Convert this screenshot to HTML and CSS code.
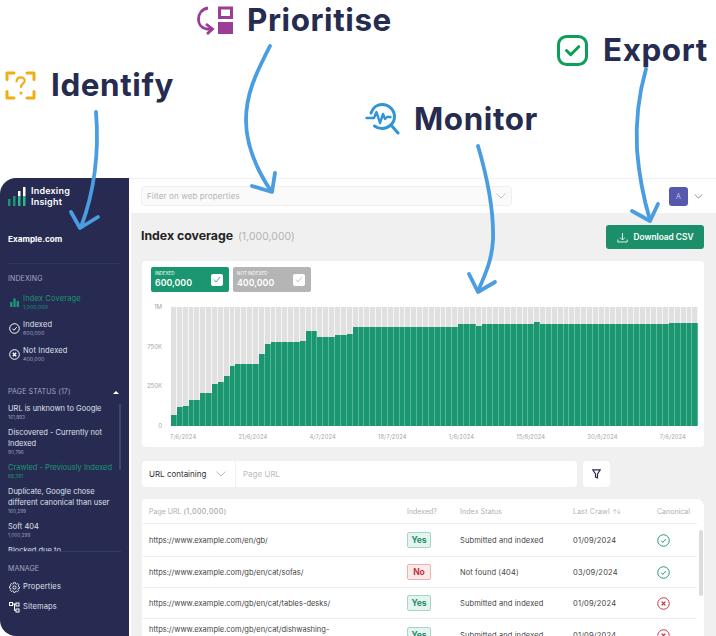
FILE: index.html
```html
<!DOCTYPE html>
<html lang="en">
<head>
<meta charset="utf-8">
<title>Indexing Insight</title>
<link rel="stylesheet" href="styles.css">
</head>
<body>
<div class="stage">
  <header class="hero">
    <div class="callout callout-identify">
      <svg class="callout-icon" width="33" height="31" viewBox="0 0 33 31" fill="none" stroke="#f1ad14" stroke-width="3" stroke-linecap="round" stroke-linejoin="round"><path d="M10 3H3v6.500M23 3h7v6.500M10 28H3v-6.500M23 28h7v-6.500"/><path d="M12.500 11.500c.3-2.800 2-4.200 4.200-4.200 2.300 0 4 1.500 4 3.500 0 2.800-3.700 3-3.700 6.200" stroke-width="2.200"/><circle cx="17" cy="23" r=".8" fill="#f1ad14" stroke-width="1.500"/></svg>
      <span>Identify</span>
    </div>
    <div class="callout callout-prioritise">
      <svg class="callout-icon" width="37" height="30" viewBox="0 0 37 30" fill="none"><path d="M11 3C5 4 1.500 8.500 1.500 14.500c0 4.500 3 8.500 8 9.500h5" stroke="#9b3d97" stroke-width="2.800"/><path d="M9 19l6.500 5-5.500 5" stroke="#9b3d97" stroke-width="2.800"/><rect x="22.500" y="3" width="12" height="9.500" stroke="#9b3d97" stroke-width="3"/><rect x="21" y="17" width="15" height="12" fill="#9b3d97"/></svg>
      <span>Prioritise</span>
    </div>
    <div class="callout callout-monitor">
      <svg class="callout-icon" width="35" height="32" viewBox="0 0 35 32" fill="none" stroke="#2f94d8" stroke-width="3" stroke-linecap="round" stroke-linejoin="round"><path d="M6 10C8 4 13 1.500 17 1.500c7 0 12.500 5.500 12.500 12S24 25.500 17 25.500c-3 0-5.500-1-7.500-2.500"/><path d="M26 22l7 8"/><path d="M1.500 15H9l2.500-6 3.500 11 3-9 2 5 2-2h3.500" stroke-width="2.400"/></svg>
      <span>Monitor</span>
    </div>
    <div class="callout callout-export">
      <svg class="callout-icon" width="31" height="31" viewBox="0 0 31 31" fill="none" stroke="#0d9f57" stroke-linecap="round" stroke-linejoin="round"><rect x="1.500" y="1.500" width="28" height="28" rx="8" stroke-width="3"/><path d="M9.500 15.500l4.200 4.200 8-8" stroke-width="3"/></svg>
      <span>Export</span>
    </div>
  </header>

  <div class="app">
    <aside class="sidebar">
      <div class="brand">
        <svg width="18" height="19" viewBox="0 0 18 19"><rect x="0" y="12" width="2.500" height="7" fill="#1a9670"/><rect x="5" y="9" width="2.500" height="10" fill="#1a9670"/><rect x="10" y="4" width="2.500" height="5" fill="#fff"/><rect x="10" y="9" width="2.500" height="10" fill="#2bb889"/><rect x="15" y="0" width="2.500" height="9" fill="#fff"/><rect x="15" y="9" width="2.500" height="10" fill="#2bb889"/></svg>
        <div class="brand-name">Indexing<br>Insight</div>
      </div>
      <div class="site">Example.com</div>
      <hr class="rule">
      <div class="nav-title">INDEXING</div>
      <ul class="nav">
        <li class="nav-item is-active">
          <svg width="11" height="11" viewBox="0 0 11 11" fill="#1a9670"><rect x="1" y="5" width="2.400" height="5"/><rect x="4.300" y="1.500" width="2.400" height="8.500"/><rect x="7.600" y="4" width="2.400" height="6"/></svg>
          <div><div class="nav-label">Index Coverage</div><div class="nav-sub">1,000,000</div></div>
        </li>
        <li class="nav-item">
          <svg width="11" height="11" viewBox="0 0 11 11" fill="none" stroke="#fff" stroke-width="1"><circle cx="5.500" cy="5.500" r="4.800"/><path d="M3.500 5.700l1.500 1.500 2.700-3"/></svg>
          <div><div class="nav-label">Indexed</div><div class="nav-sub">600,000</div></div>
        </li>
        <li class="nav-item">
          <svg width="11" height="11" viewBox="0 0 11 11" fill="none" stroke="#fff" stroke-width="1"><circle cx="5.500" cy="5.500" r="4.800"/><path d="M3.800 3.800l3.400 3.400M7.200 3.800l-3.400 3.400" stroke-width="1.400"/></svg>
          <div><div class="nav-label">Not Indexed</div><div class="nav-sub">400,000</div></div>
        </li>
      </ul>
      <div class="nav-title nav-title-row">PAGE STATUS (17)<span class="caret"></span></div>
      <div class="status-scroll">
        <span class="status-thumb"></span>
        <div class="status"><div class="status-label">URL is unknown to Google</div><div class="status-sub">161,893</div></div>
        <div class="status"><div class="status-label">Discovered - Currently not Indexed</div><div class="status-sub">90,796</div></div>
        <div class="status is-active"><div class="status-label">Crawled - Previously Indexed</div><div class="status-sub">88,391</div></div>
        <div class="status"><div class="status-label">Duplicate, Google chose different canonical than user</div><div class="status-sub">160,299</div></div>
        <div class="status"><div class="status-label">Soft 404</div><div class="status-sub">1,000,299</div></div>
        <div class="status"><div class="status-label">Blocked due to</div></div>
      </div>
      <div class="nav-title manage-title">MANAGE</div>
      <ul class="nav manage">
        <li class="nav-item">
          <svg width="11" height="11" viewBox="0 0 24 24" fill="none" stroke="#fff" stroke-width="2"><circle cx="12" cy="12" r="3.500"/><path d="M10 2h4l.6 3 2.500 1 2.600-1.700 2.800 2.800L20.800 9.700l1 2.500 2.200.6v3l-3 .6-1 2.500 1.700 2.600-2.800 2.800-2.600-1.700-2.500 1L13.200 26h-3l-.6-3-2.500-1-2.600 1.700-2.800-2.800 1.700-2.600-1-2.500-3-.6v-4l3-.6 1-2.500L1.700 6.800l2.800-2.800 2.600 1.700 2.500-1z" transform="translate(1.300 -.5) scale(.9)"/></svg>
          <div class="nav-label">Properties</div>
        </li>
        <li class="nav-item">
          <svg width="11" height="11" viewBox="0 0 11 11" fill="none" stroke="#fff" stroke-width="1"><rect x=".5" y=".5" width="3" height="3"/><rect x="7" y="1" width="3" height="3"/><rect x="7" y="7" width="3" height="3"/><path d="M3.500 2h3.500M5.500 2v6.500H7"/></svg>
          <div class="nav-label">Sitemaps</div>
        </li>
      </ul>
    </aside>

    <main class="main">
      <div class="topbar">
        <div class="prop-filter">
          <span>Filter on web properties</span>
          <svg class="chev" width="10" height="6" viewBox="0 0 10 6" fill="none" stroke="#c4c4c4" stroke-width="1"><path d="M.5.5L5 5 9.500.5"/></svg>
        </div>
        <div class="avatar">A</div>
        <svg class="chev" width="9" height="5" viewBox="0 0 10 6" fill="none" stroke="#777" stroke-width="1"><path d="M.5.5L5 5 9.500.5"/></svg>
      </div>

      <div class="content">
        <div class="title-row">
          <h1 class="title">Index coverage <span class="title-count">(1,000,000)</span></h1>
          <button class="download" type="button">
            <svg width="11" height="11" viewBox="0 0 11 11" fill="none" stroke="#d8f0e7" stroke-width="1"><path d="M5.500 1v6.500M3 5.500l2.500 2.500L8 5.500M.8 7.500V10h9.400V7.500"/></svg>
            Download CSV
          </button>
        </div>

        <section class="chart-card">
          <div class="stats">
            <div class="stat stat-on"><div><div class="stat-label">INDEXED</div><div class="stat-value">600,000</div></div><span class="stat-check"><svg width="8" height="7" viewBox="0 0 8 7" fill="none" stroke="#1a9670" stroke-width=".8"><path d="M1 3.500l2 2.500 4-5"/></svg></span></div>
            <div class="stat stat-off"><div><div class="stat-label">NOT INDEXED</div><div class="stat-value">400,000</div></div><span class="stat-check"><svg width="8" height="7" viewBox="0 0 8 7" fill="none" stroke="#b5b5b5" stroke-width=".8"><path d="M1 3.500l2 2.500 4-5"/></svg></span></div>
          </div>
          <div class="plot">
            <div class="y-axis"><span>1M</span><span>750K</span><span>250K</span><span>0</span></div>
            <div class="bars" id="bars"></div>
          </div>
          <div class="x-axis"><span>7/6/2024</span><span>21/6/2024</span><span>4/7/2024</span><span>18/7/2024</span><span>1/8/2024</span><span>15/8/2024</span><span>30/8/2024</span><span>7/6/2024</span></div>
        </section>

        <div class="filter-row">
          <div class="search">
            <div class="search-type">URL containing<svg width="10" height="6" viewBox="0 0 10 6" fill="none" stroke="#bbb" stroke-width="1"><path d="M.5.5L5 5 9.500.5"/></svg></div>
            <div class="search-input">Page URL</div>
          </div>
          <button class="filter-btn" type="button" aria-label="Filter"><svg width="9" height="10" viewBox="0 0 9 10" fill="none" stroke="#2a2d4f" stroke-width="1.200"><path d="M.7.8h7.600L5.500 5v3.800L3.500 8V5z"/></svg></button>
        </div>

        <section class="table-card">
          <span class="table-thumb"></span>
          <div class="row row-head">
            <div class="c-url">Page URL <b>(1,000,000)</b></div><div class="c-idx">Indexed?</div><div class="c-status">Index Status</div><div class="c-date">Last Crawl <span class="sort">↑↓</span></div><div class="c-can">Canonical</div>
          </div>
          <div class="row row-1">
            <div class="c-url">https://www.example.com/en/gb/</div><div class="c-idx"><span class="pill yes">Yes</span></div><div class="c-status">Submitted and indexed</div><div class="c-date">01/09/2024</div><div class="c-can"><svg class="ok" width="13" height="13" viewBox="0 0 14 14"><circle cx="7" cy="7" r="6.200"/><path d="M4.500 7.200l1.800 1.800 3.200-3.500"/></svg></div>
          </div>
          <div class="row">
            <div class="c-url">https://www.example.com/gb/en/cat/sofas/</div><div class="c-idx"><span class="pill no">No</span></div><div class="c-status">Not found (404)</div><div class="c-date">03/09/2024</div><div class="c-can"><svg class="ok" width="13" height="13" viewBox="0 0 14 14"><circle cx="7" cy="7" r="6.200"/><path d="M4.500 7.200l1.800 1.800 3.200-3.500"/></svg></div>
          </div>
          <div class="row">
            <div class="c-url">https://www.example.com/gb/en/cat/tables-desks/</div><div class="c-idx"><span class="pill yes">Yes</span></div><div class="c-status">Submitted and indexed</div><div class="c-date">01/09/2024</div><div class="c-can"><svg class="bad" width="13" height="13" viewBox="0 0 14 14"><circle cx="7" cy="7" r="6.200"/><path d="M5 5l4 4M9 5l-4 4"/></svg></div>
          </div>
          <div class="row row-last">
            <div class="c-url">https://www.example.com/gb/en/cat/dishwashing-</div><div class="c-idx"><span class="pill yes">Yes</span></div><div class="c-status">Submitted and indexed</div><div class="c-date">01/09/2024</div><div class="c-can"><svg class="bad" width="13" height="13" viewBox="0 0 14 14"><circle cx="7" cy="7" r="6.200"/><path d="M5 5l4 4M9 5l-4 4"/></svg></div>
          </div>
        </section>
      </div>
    </main>
  </div>

  <svg class="arrows" width="716" height="636" viewBox="0 0 716 636" fill="none" stroke="#4a9de0" stroke-width="3.800" stroke-linecap="round" stroke-linejoin="round">
    <path d="M96 112C99 150 95 190 81 227"/><path d="M71 212L80 228 98 217"/>
    <path d="M270 46C255 75 246 95 246 120C246 145 257 170 271 191"/><path d="M252 186L272 192 275 173"/>
    <path d="M478 146C488 180 494 210 493 240C492 260 485 275 478 291"/><path d="M469 274L478 292 495 282"/>
    <path d="M646 69C637 100 636 130 637 150C639 175 644 200 650 220"/><path d="M632 211L650 221 658 204"/>
  </svg>
</div>
<script src="chart.js"></script>
</body>
</html>
```

FILE: styles.css
```css
* { box-sizing: border-box; }
html, body { margin: 0; padding: 0; background: #fff; }
body { font-family: Inter, "Liberation Sans", sans-serif; color: #333; }
ul { list-style: none; margin: 0; padding: 0; }
h1 { margin: 0; }
button { font-family: inherit; border: 0; padding: 0; }

.stage { position: relative; width: 716px; height: 636px; overflow: hidden; }
.hero { position: relative; height: 178px; }
.arrows { position: absolute; left: 0; top: 0; pointer-events: none; }

.callout { position: absolute; display: flex; align-items: center; color: #262b50; font-weight: 700; font-size: 31.400px; line-height: 36px; white-space: nowrap; letter-spacing: .6px; }
.callout-identify { left: 4px; top: 67px; gap: 14px; }
.callout-prioritise { left: 197px; top: 2px; gap: 13px; }
.callout-monitor { left: 365px; top: 101px; gap: 14px; }
.callout-export { left: 557px; top: 32px; gap: 15px; }

.app { display: flex; height: 458px; }

.sidebar { width: 129px; flex: none; background: #272b52; border-radius: 16px 0 0 16px; color: #e8e9f0; padding: 8px 8px 0; overflow: hidden; }
.brand { display: flex; gap: 5px; align-items: center; height: 20px; }
.brand-name { color: #fff; font-size: 9px; line-height: 11px; font-weight: 600; letter-spacing: .2px; }
.site { margin-top: 27px; color: #fff; font-size: 8.200px; font-weight: 700; line-height: 12px; }
.rule { margin: 18px 0 0; border: 0; border-top: 1px solid #30355e; }
.nav-title { margin-top: 10px; font-size: 7px; line-height: 10px; color: #a4a7c2; letter-spacing: .12px; }
.nav { margin-top: 5px; }
.nav-item { display: flex; align-items: center; gap: 3px; height: 26px; }
.nav-item > svg { flex: none; margin-left: 1px; }
.nav-label { font-size: 7.500px; line-height: 10px; color: #dfe0ea; letter-spacing: .15px; white-space: nowrap; }
.nav-sub { font-size: 5.300px; line-height: 7px; color: #9a9dbb; }
.is-active .nav-label, .is-active .nav-sub { color: #1a9670; }
.nav-title-row { margin-top: 20px; display: flex; justify-content: space-between; align-items: center; padding-right: 2px; }
.caret { width: 0; height: 0; border-left: 3px solid transparent; border-right: 3px solid transparent; border-bottom: 3px solid #fff; }
.status-scroll { position: relative; height: 149px; margin-top: 6px; overflow: hidden; border-bottom: 1px solid #353a66; }
.status-thumb { position: absolute; right: 0; top: 1px; width: 2px; height: 66px; background: #3f4470; }
.status { margin-bottom: 7px; padding-right: 4px; }
.status-label { font-size: 7.500px; line-height: 11px; color: #dfe0ea; }
.status-sub { font-size: 4.800px; line-height: 6px; color: #9a9dbb; }
.status.is-active .status-label, .status.is-active .status-sub { color: #1a9670; }
.manage-title { margin-top: 12px; }
.manage { margin-top: 3px; }
.manage .nav-item { height: 20px; }

.main { flex: 1; min-width: 0; display: flex; flex-direction: column; }
.topbar { height: 35px; flex: none; display: flex; align-items: center; padding: 0 12px; border-top: 1px solid #f0f0f0; }
.prop-filter { width: 371px; height: 20px; display: flex; align-items: center; justify-content: space-between; padding: 0 5px; background: #fafafa; border: 1px solid #efefef; border-radius: 4px; font-size: 8px; color: #b4b4b4; letter-spacing: .12px; }
.avatar { margin-left: 157px; width: 19px; height: 19px; border-radius: 3px; background: #5558ad; color: #c9caeb; font-size: 7px; display: flex; align-items: center; justify-content: center; }
.topbar > .chev { margin-left: 6px; }

.content { flex: 1; min-height: 0; background: #f0f0f0; padding: 12px 12px 0 12px; margin-left: 2px; overflow: hidden; }
.title-row { display: flex; justify-content: space-between; align-items: center; height: 24px; margin-left: -2px; }
.title { font-size: 12.300px; line-height: 15px; font-weight: 700; color: #222; margin-top: -3px; }
.title-count { font-weight: 400; font-size: 10.300px; color: #b3b3b3; margin-left: 2px; letter-spacing: .1px; }
.download { width: 98px; height: 24px; border-radius: 3px; background: #1a8f6a; color: #fff; font-size: 8.300px; font-weight: 600; display: flex; align-items: center; justify-content: center; gap: 6px; }

.chart-card { margin-top: 12px; margin-left: -1px; height: 186px; background: #fff; border-radius: 4px; padding: 6px 5px 0 9px; }
.stats { display: flex; gap: 4px; }
.stat { width: 78px; height: 25px; border-radius: 2px; color: #fff; display: flex; align-items: center; justify-content: space-between; padding: 0 6px 0 4px; }
.stat-on { background: #1a9670; }
.stat-off { background: #b5b5b5; }
.stat-label { font-size: 4.500px; line-height: 6px; }
.stat-value { font-size: 8.800px; line-height: 11px; font-weight: 600; }
.stat-check { width: 12px; height: 12px; background: #fff; border-radius: 2px; display: flex; align-items: center; justify-content: center; }
.plot { display: flex; margin-top: 15px; height: 119px; }
.y-axis { width: 20px; flex: none; display: flex; flex-direction: column; justify-content: space-between; align-items: flex-end; padding-right: 9px; font-size: 6px; line-height: 6px; color: #a6a6a6; margin: -3px 0; white-space: nowrap; }
.bars { flex: 1; display: flex; align-items: stretch; margin-left: 0; }
.bar { flex: 1 1 0; background: #e0e0e0; border-right: 1px solid #f6f6f6; display: flex; align-items: flex-end; }
.bar-fill { flex: 1; background: #1a9670; margin-right: -1px; border-right: 1px solid #56b597; }
.x-axis { display: flex; justify-content: space-between; margin: 7px 13px 0 19px; font-size: 5.800px; line-height: 7px; color: #a6a6a6; letter-spacing: .1px; }

.filter-row { display: flex; gap: 6px; margin-top: 14px; margin-left: -1px; }
.search { width: 435px; height: 26px; background: #fff; border-radius: 4px; display: flex; align-items: center; }
.search-type { width: 94px; height: 100%; border-right: 1px solid #f0f0f0; display: flex; align-items: center; justify-content: space-between; padding: 0 9px 0 7px; font-size: 8px; color: #333; }
.search-input { padding-left: 7px; font-size: 8px; color: #bdbdbd; }
.filter-btn { width: 27px; height: 26px; border-radius: 4px; background: #fff; display: flex; align-items: center; justify-content: center; }

.table-card { position: relative; margin-top: 12px; margin-left: -1px; background: #fff; border-radius: 4px 8px 0 0; height: 180px; font-size: 7.500px; color: #444; overflow: hidden; }
.table-thumb { position: absolute; right: 1px; top: 31px; width: 4px; height: 66px; background: #dcdcdc; border-radius: 2px; }
.row { display: flex; align-items: center; height: 31px; border-top: 1px solid #efefef; margin-right: 7px; padding-left: 7px; }
.row-head { height: 24px; border-top: 0; margin-right: 0; color: #b0b0b0; font-size: 7px; }
.row-head b { font-weight: 500; color: #a8a8a8; letter-spacing: .4px; }
.row-1 { height: 33px; }
.c-url { width: 258px; flex: none; white-space: nowrap; }
.c-idx { width: 53px; flex: none; }
.c-status { width: 113px; flex: none; white-space: nowrap; letter-spacing: .1px; }
.c-date { width: 84px; flex: none; white-space: nowrap; letter-spacing: .2px; }
.c-can { flex: none; width: 39px; display: flex; }
.sort { font-size: 6px; letter-spacing: -1px; }
.pill { display: inline-block; width: 24px; height: 16px; line-height: 14px; text-align: center; border-radius: 2px; border: 1px solid; font-size: 8.500px; font-weight: 700; }
.yes { background: #e6f4ef; border-color: #a6d6c5; color: #1a8f6a; }
.no { background: #fbeaea; border-color: #ecb0b0; color: #c0343f; }
.ok, .bad { fill: none; stroke-width: 1; }
.ok { stroke: #1a8f6a; }
.bad { stroke: #b8323c; }
.bad path { stroke-width: 1.400; }
.row-last { height: 33px; }
.row-last .c-url { align-self: flex-start; padding-top: 6px; }
```

FILE: chart.js
```js
var tops = [344,322,318,300,300,280,280,253,246,227,198,193,191,191,191,162,133,128,128,128,128,128,123,93,93,111,111,111,106,106,103];
var i;
for (i = 0; i < 18; i++) tops.push(81);
tops.push(73, 73, 73, 80);
for (i = 0; i < 9; i++) tops.push(72);
tops.push(68);
for (i = 0; i < 22; i++) tops.push(72);
tops.push(69, 69, 69, 69, 69);

var bars = document.getElementById('bars');
tops.forEach(function (top) {
  var bar = document.createElement('div');
  bar.className = 'bar';
  var fill = document.createElement('div');
  fill.className = 'bar-fill';
  fill.style.height = ((378 - top) / 356 * 100).toFixed(1) + '%';
  bar.appendChild(fill);
  bars.appendChild(bar);
});
```
